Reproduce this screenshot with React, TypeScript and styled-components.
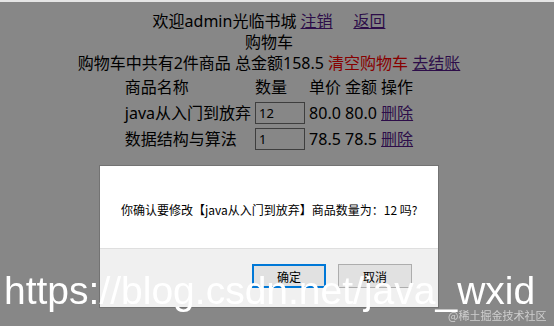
import styled, { createGlobalStyle } from "styled-components";

const GlobalStyle = createGlobalStyle`
    html, body {
        margin: 0;
        padding: 0;
        background: #ffffff;
    }
    body {
        font-family: "Noto Sans", "Noto Sans CJK SC", sans-serif;
        color: #000;
    }
`;

const cartItems = [
    { name: "java从入门到放弃", count: 12, price: "80.0", total: "80.0" },
    { name: "数据结构与算法", count: 1, price: "78.5", total: "78.5" },
];

export default function App() {
    return (
        <>
            <GlobalStyle />
            <Page>
                <Line>
                    欢迎admin光临书城 <Link href="#">注销</Link>&nbsp;&nbsp;&nbsp;&nbsp; <Link href="#">返回</Link>
                </Line>
                <Line>购物车</Line>
                <Line>
                    购物车中共有2件商品 总金额158.5 <DangerLink href="#">清空购物车</DangerLink> <Link href="#">去结账</Link>
                </Line>
                <CartTable>
                    <tbody>
                        <tr>
                            <Cell>商品名称</Cell>
                            <Cell>数量</Cell>
                            <Cell>单价</Cell>
                            <Cell>金额</Cell>
                            <Cell>操作</Cell>
                        </tr>
                        {cartItems.map((item) => (
                            <tr key={item.name}>
                                <Cell>{item.name}</Cell>
                                <Cell>
                                    <CountInput defaultValue={item.count} />
                                </Cell>
                                <Cell>{item.price}</Cell>
                                <Cell>{item.total}</Cell>
                                <Cell>
                                    <Link href="#">删除</Link>
                                </Cell>
                            </tr>
                        ))}
                    </tbody>
                </CartTable>
            </Page>

            <Overlay>
                <Dialog>
                    <DialogBody>你确认要修改【java从入门到放弃】商品数量为：12 吗?</DialogBody>
                    <DialogFooter>
                        <DialogButton $primary>确定</DialogButton>
                        <DialogButton>取消</DialogButton>
                    </DialogFooter>
                </Dialog>
            </Overlay>

            <Watermark>https://blog.csdn.net/java_wxid</Watermark>
            <SmallMark>@稀土掘金技术社区</SmallMark>
        </>
    );
}

const Page = styled.div`
    width: 538px;
    padding-top: 11px;
    text-align: center;
    font-size: 16px;
`;

const Line = styled.div`
    line-height: 21px;
    white-space: nowrap;
`;

const Link = styled.a`
    color: #551a8b;
    text-decoration: underline;
`;

const DangerLink = styled.a`
    color: #ff0000;
    text-decoration: none;
`;

const CartTable = styled.table`
    margin: 0 auto;
    border-spacing: 2px;
    text-align: left;
    font-size: 16px;
`;

const Cell = styled.td`
    padding: 1px;
    line-height: 21px;
    white-space: nowrap;
`;

const CountInput = styled.input`
    box-sizing: border-box;
    width: 50px;
    height: 22px;
    border: 1px solid #767676;
    padding: 0 3px;
    font-family: "Noto Sans", sans-serif;
    font-size: 13px;
    background: #ffffff;
    display: block;
`;

const Overlay = styled.div`
    position: fixed;
    inset: 0;
    border-top: 2px solid rgba(0, 0, 0, 0.1);
    background: rgba(0, 0, 0, 0.47);
    background-clip: padding-box;
`;

const Dialog = styled.div`
    width: 338px;
    margin: 164px 0 0 100px;
    box-shadow: 0 0 0 1px rgba(0, 0, 0, 0.15);
    font-family: "Noto Sans CJK SC", sans-serif;
    font-size: 12px;
    color: #000;
`;

const DialogBody = styled.div`
    height: 83px;
    box-sizing: border-box;
    padding: 35px 0 0 21px;
    background: #ffffff;
    border-bottom: 1px solid #dfdfdf;
    line-height: 18px;
    white-space: nowrap;
`;

const DialogFooter = styled.div`
    height: 58px;
    box-sizing: border-box;
    background: #f0f0f0;
    display: flex;
    justify-content: flex-end;
    align-items: flex-start;
    gap: 12px;
    padding: 15px 26px 0 0;
`;

const DialogButton = styled.button<{ $primary?: boolean }>`
    box-sizing: border-box;
    width: 74px;
    height: 24px;
    background: #e1e1e1;
    border: ${(p) => (p.$primary ? "2px solid #0078d7" : "1px solid #adadad")};
    font-family: "Noto Sans CJK SC", sans-serif;
    font-size: 12px;
    color: #000;
    padding: 0;
`;

const Watermark = styled.div`
    position: fixed;
    left: 4px;
    top: 271px;
    font-family: "Liberation Sans", Arial, sans-serif;
    font-size: 39px;
    line-height: 39px;
    color: #ffffff;
    white-space: nowrap;
`;

const SmallMark = styled.div`
    position: fixed;
    left: 448px;
    top: 308px;
    font-family: "Noto Sans CJK SC", sans-serif;
    font-size: 11px;
    line-height: 14px;
    color: rgba(230, 230, 230, 0.75);
    white-space: nowrap;
`;
